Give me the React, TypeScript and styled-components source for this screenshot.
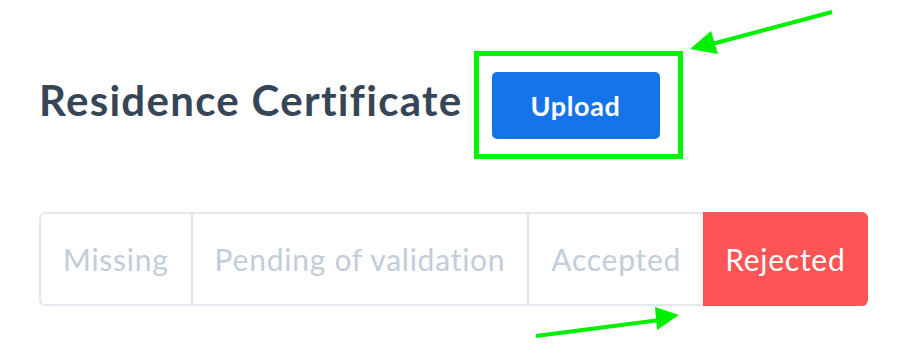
import React from "react";
import styled, { createGlobalStyle } from "styled-components";

const Global = createGlobalStyle`
  html, body { margin: 0; padding: 0; background: #ffffff; }
  body { font-family: Lato, "Liberation Sans", sans-serif; }
`;

const Page = styled.div`
  position: relative;
  width: 908px;
  height: 363px;
  padding: 51px 0 0 39px;
  box-sizing: border-box;
  overflow: hidden;
`;

const HeaderRow = styled.div`
  display: flex;
  align-items: center;
  gap: 11px;
`;

const Title = styled.h1`
  margin: 0 0 9px 0;
  font-size: 42px;
  line-height: 1.1;
  font-weight: 700;
  color: #364656;
  letter-spacing: 1.3px;
`;

const Highlight = styled.div`
  border: 5px solid #00f500;
  padding: 16px 18px 15px 13px;
  display: flex;
`;

const UploadButton = styled.button`
  width: 168px;
  height: 67px;
  border: none;
  border-radius: 5px;
  background: #1574ea;
  color: #ffffff;
  font-family: Lato, "Liberation Sans", sans-serif;
  font-size: 27px;
  font-weight: 700;
  letter-spacing: 0.6px;
  cursor: pointer;
`;

const Segments = styled.div`
  display: inline-flex;
  margin-top: 53px;
  border: 2px solid #e2e8ee;
  border-radius: 6px;
  height: 94px;
  box-sizing: border-box;
`;

const Segment = styled.div<{ $active?: boolean; $first?: boolean }>`
  display: flex;
  align-items: center;
  padding: 0 22px;
  font-size: 30px;
  letter-spacing: 0.75px;
  color: ${(p) => (p.$active ? "#ffffff" : "#c1cdda")};
  background: ${(p) => (p.$active ? "#fd5455" : "transparent")};
  border-left: ${(p) => (p.$first ? "none" : "2px solid #e2e8ee")};
  ${(p) => (p.$active ? "margin: -2px -2px -2px 0; border: none; border-radius: 0 6px 6px 0;" : "")}
`;

const Overlay = styled.svg`
  position: absolute;
  left: 0;
  top: 0;
  pointer-events: none;
`;

export default function App() {
  const items = ["Missing", "Pending of validation", "Accepted", "Rejected"];
  return (
    <>
      <Global />
      <Page>
        <HeaderRow>
          <Title>Residence Certificate</Title>
          <Highlight>
            <UploadButton>Upload</UploadButton>
          </Highlight>
        </HeaderRow>
        <Segments>
          {items.map((t, i) => (
            <Segment key={t} $active={t === "Rejected"} $first={i === 0}>
              {t}
            </Segment>
          ))}
        </Segments>
        <Overlay width="908" height="363" viewBox="0 0 908 363">
          <line x1="832" y1="12" x2="712" y2="44" stroke="#00f000" strokeWidth="4" />
          <polygon points="690,49 711,31 718,54" fill="#00f000" />
          <line x1="536" y1="336" x2="660" y2="320" stroke="#00f000" strokeWidth="4" />
          <polygon points="679,315 655,307 657,330" fill="#00f000" />
        </Overlay>
      </Page>
    </>
  );
}
